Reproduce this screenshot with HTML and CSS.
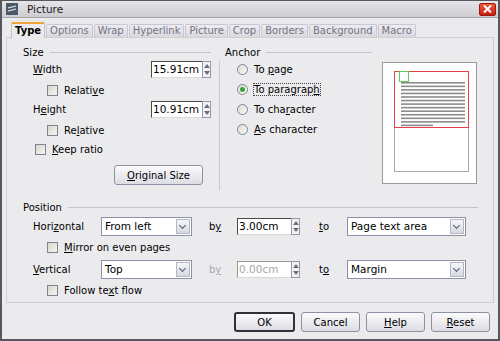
FILE: index.html
```html
<!DOCTYPE html>
<html lang="en">
<head>
    <meta charset="UTF-8">
    <title>Picture</title>
    <link rel="stylesheet" href="styles.css">
</head>
<body>
    <div class="window">
        <div class="titlebar">
            <span class="title-icon">
                <svg width="12" height="12" viewBox="0 0 12 12">
                    <rect x="0" y="0" width="12" height="12" fill="#4b5a66"/>
                    <path d="M2 5 L10 3 M2 8 L10 6" stroke="#e8eef2" stroke-width="1.2"/>
                </svg>
            </span>
            <span class="title">Picture</span>
            <span class="close">
                <svg width="9" height="8" viewBox="0 0 9 8">
                    <path d="M1 0.5 L8 7.5 M8 0.5 L1 7.5" stroke="#fff" stroke-width="2"/>
                </svg>
            </span>
        </div>

        <div class="body">
            <div class="tabs">
                <span class="tab active">Type</span>
                <span class="tab">Options</span>
                <span class="tab">Wrap</span>
                <span class="tab">Hyperlink</span>
                <span class="tab">Picture</span>
                <span class="tab">Crop</span>
                <span class="tab">Borders</span>
                <span class="tab">Background</span>
                <span class="tab">Macro</span>
            </div>

            <div class="panel">
                <div class="top">
                    <div class="size">
                        <div class="sec-head"><span>Size</span><i class="rule"></i></div>
                        <div class="row row-input">
                            <span class="lbl"><u>W</u>idth</span>
                            <span class="spin"><span class="field">15.91cm</span><span class="arrows"></span></span>
                        </div>
                        <div class="row row-check indent2">
                            <span class="check"></span><span>Relati<u>v</u>e</span>
                        </div>
                        <div class="row row-input second">
                            <span class="lbl">H<u>e</u>ight</span>
                            <span class="spin"><span class="field">10.91cm</span><span class="arrows"></span></span>
                        </div>
                        <div class="row row-check indent2">
                            <span class="check"></span><span>Re<u>l</u>ative</span>
                        </div>
                        <div class="row row-check keep">
                            <span class="check"></span><span><u>K</u>eep ratio</span>
                        </div>
                        <button class="btn orig"><u>O</u>riginal Size</button>
                    </div>

                    <div class="vsep"></div>

                    <div class="anchor">
                        <div class="sec-head"><span>Anchor</span><i class="rule"></i></div>
                        <div class="radio-row"><span class="radio"></span><span>To <u>p</u>age</span></div>
                        <div class="radio-row"><span class="radio on"></span><span class="focus">To paragrap<u>h</u></span></div>
                        <div class="radio-row"><span class="radio"></span><span>To cha<u>r</u>acter</span></div>
                        <div class="radio-row"><span class="radio"></span><span><u>A</u>s character</span></div>
                    </div>

                    <div class="preview">
                        <svg width="95" height="122" viewBox="0 0 95 122">
                            <rect x="0.5" y="0.5" width="94" height="121" fill="#fff" stroke="#9a9a9a"/>
                            <rect x="12.5" y="9.5" width="74" height="100" fill="#fff" stroke="#a8a8a8"/>
                            <g fill="#8c8c8c" id="lines"></g>
                            <rect x="12.5" y="9.5" width="74" height="56" fill="none" stroke="#e8404a"/>
                            <rect x="17.5" y="9.5" width="9" height="10" fill="none" stroke="#5ad05a"/>
                        </svg>
                    </div>
                </div>

                <div class="position">
                    <div class="sec-head"><span>Position</span><i class="rule"></i></div>
                    <div class="pos-row">
                        <span class="lbl">Hori<u>z</u>ontal</span>
                        <span class="select w-small"><span class="value">From left</span><span class="drop"></span></span>
                        <span class="by">b<u>y</u></span>
                        <span class="spin"><span class="field">3.00cm</span><span class="arrows"></span></span>
                        <span class="to"><u>t</u>o</span>
                        <span class="select w-large"><span class="value">Page text area</span><span class="drop"></span></span>
                    </div>
                    <div class="row row-check indent2">
                        <span class="check"></span><span><u>M</u>irror on even pages</span>
                    </div>
                    <div class="pos-row">
                        <span class="lbl"><u>V</u>ertical</span>
                        <span class="select w-small"><span class="value">Top</span><span class="drop"></span></span>
                        <span class="by disabled">b<u>y</u></span>
                        <span class="spin"><span class="field disabled">0.00cm</span><span class="arrows"></span></span>
                        <span class="to">t<u>o</u></span>
                        <span class="select w-large"><span class="value">Margin</span><span class="drop"></span></span>
                    </div>
                    <div class="row row-check indent2">
                        <span class="check"></span><span>Follow te<u>x</u>t flow</span>
                    </div>
                </div>
            </div>

            <div class="buttons">
                <button class="btn default">OK</button>
                <button class="btn">Cancel</button>
                <button class="btn"><u>H</u>elp</button>
                <button class="btn"><u>R</u>eset</button>
            </div>
        </div>
    </div>

    <script>
        // text lines inside the anchor preview
        const lines = document.getElementById('lines');
        for (let i = 0; i < 13; i++) {
            const r = document.createElementNS('http://www.w3.org/2000/svg', 'rect');
            r.setAttribute('x', 19);
            r.setAttribute('y', 20 + i * 3.55);
            r.setAttribute('width', i === 12 ? 32 : 64);
            r.setAttribute('height', 1.6);
            lines.appendChild(r);
        }
    </script>
</body>
</html>
```

FILE: styles.css
```css
* {
    box-sizing: border-box;
}

body {
    margin: 0;
    font-family: "DejaVu Sans", sans-serif;
    font-size: 10px;
    color: #000;
    background: #fff;
}

u {
    text-decoration-thickness: 1px;
    text-underline-offset: 1px;
}

.window {
    width: 500px;
    height: 341px;
    border: 2px solid #56585d;
    border-top: 1px solid #56585d;
    background: #ebebee;
    display: flex;
    flex-direction: column;
}

/* title bar */
.titlebar {
    height: 17px;
    display: flex;
    align-items: center;
    padding: 0 2px;
    background: linear-gradient(#e6e6ea, #cdcdd2);
    border-bottom: 1px solid #a4a4aa;
}

.title-icon {
    display: flex;
    margin-left: 2px;
}

.title {
    margin-left: 9px;
    font-size: 10.5px;
    color: #1a1a1a;
}

.close {
    margin-left: auto;
    width: 17px;
    height: 13px;
    display: flex;
    align-items: center;
    justify-content: center;
    background: linear-gradient(#f05a3c, #c81e10);
    border: 1px solid #9a1a10;
    border-radius: 2px;
}

.body {
    flex: 1;
    display: flex;
    flex-direction: column;
    padding: 4px 4px 0 4px;
}

/* tabs */
.tabs {
    display: flex;
    align-items: flex-end;
    height: 15px;
    padding-left: 5px;
    gap: 1px;
}

.tab {
    height: 13px;
    line-height: 12px;
    padding: 0 3px;
    color: #74747c;
    background: linear-gradient(#ececf2, #d8d8e0);
    border: 1px solid #c8c8d0;
    border-bottom: none;
    border-radius: 2px 2px 0 0;
}

.tab.active {
    height: 16px;
    line-height: 14px;
    margin-bottom: -1px;
    font-weight: bold;
    color: #000;
    background: #ebebee;
    border-top: 2px solid #f0a438;
    border-color: #c4c4ca;
    border-top-color: #f0a438;
    position: relative;
}

/* main panel */
.panel {
    border: 1px solid #cfcfd4;
    padding: 8px 15px 2px 16px;
}

.top {
    display: flex;
    align-items: flex-start;
}

.sec-head {
    height: 12px;
    display: flex;
    align-items: center;
    gap: 6px;
}

.sec-head .rule {
    flex: 1;
    height: 1px;
    background: #c4c4ca;
}

.size {
    width: 188px;
}

.row {
    display: flex;
    align-items: center;
}

.row-input {
    height: 17px;
    margin-top: 3px;
    padding-left: 10px;
    justify-content: space-between;
}

.row-input.second {
    margin-top: 1px;
}

.row-check {
    height: 20px;
    margin-top: 2px;
    gap: 6px;
}

.indent2 {
    padding-left: 24px;
}

.keep {
    height: 19px;
    margin-top: 0;
    padding-left: 12px;
}

.check {
    width: 11px;
    height: 11px;
    border: 1px solid #7c8494;
    background: linear-gradient(135deg, #d6d6cc, #f6f6f0);
}

/* spin fields */
.spin {
    display: flex;
    height: 17px;
}

.field {
    width: 51px;
    height: 17px;
    line-height: 15px;
    padding-left: 1px;
    background: #fff;
    border-top: 1px solid #4a4a4a;
    border-left: 1px solid #4a4a4a;
    border-bottom: 1px solid #d8d8d8;
    font-size: 10.5px;
}

.field.disabled {
    color: #a8a8a8;
    border-color: #9a9a9a #d8d8d8 #d8d8d8 #9a9a9a;
}

.arrows {
    width: 9px;
    height: 17px;
    border: 1px solid #9a9aa4;
    background: #f2f2f4;
    position: relative;
}

.arrows::before,
.arrows::after {
    content: "";
    position: absolute;
    left: 1px;
    border-left: 3px solid transparent;
    border-right: 3px solid transparent;
}

.arrows::before {
    top: 2px;
    border-bottom: 4px solid #6a6e7a;
}

.arrows::after {
    bottom: 2px;
    border-top: 4px solid #6a6e7a;
}

/* buttons */
.btn {
    font-family: inherit;
    font-size: 10px;
    color: #000;
    height: 20px;
    padding: 0;
    background: linear-gradient(#fbfbfc, #dcdde4);
    border: 1px solid #8c92a4;
    border-radius: 3px;
}

.orig {
    display: block;
    width: 89px;
    margin: 6px 0 0 91px;
}

.vsep {
    width: 1px;
    height: 129px;
    margin: 15px 5px 0 8px;
    background: #c8c8ce;
}

.anchor {
    width: 147px;
}

.anchor .sec-head {
    margin-bottom: 1px;
}

.radio-row {
    display: flex;
    align-items: center;
    gap: 6px;
    height: 20px;
    padding-left: 12px;
}

.radio {
    width: 11px;
    height: 11px;
    border: 1px solid #7c8494;
    border-radius: 50%;
    background: linear-gradient(135deg, #dcdcd4, #fafaf6);
    position: relative;
}

.radio.on::after {
    content: "";
    position: absolute;
    left: 2px;
    top: 2px;
    width: 5px;
    height: 5px;
    border-radius: 50%;
    background: #3aa43a;
}

.focus {
    outline: 1px dotted #444;
    outline-offset: 0;
}

.preview {
    margin: 16px 0 0 10px;
    display: flex;
}

/* position section */
.position {
    margin-top: 11px;
    width: 455px;
}

.position .row-check {
    margin-top: 1px;
}

.pos-row {
    display: flex;
    align-items: center;
    height: 19px;
    margin-top: 4px;
    padding-left: 10px;
}

.row-check + .pos-row {
    margin-top: 3px;
}

.pos-row .lbl {
    width: 68px;
}

.select {
    display: flex;
    height: 19px;
    background: #fff;
    border: 1px solid #8c92a4;
}

.w-small {
    width: 91px;
}

.w-large {
    width: 119px;
}

.select .value {
    flex: 1;
    line-height: 17px;
    padding-left: 3px;
    font-size: 10.5px;
}

.drop {
    width: 14px;
    margin: 1px;
    background: linear-gradient(#f6f6f8, #d8d8e0);
    border: 1px solid #b4b8c4;
    position: relative;
}

.drop::after {
    content: "";
    position: absolute;
    left: 3px;
    top: 3px;
    width: 4px;
    height: 4px;
    border-right: 1.5px solid #4a5a7a;
    border-bottom: 1.5px solid #4a5a7a;
    transform: rotate(45deg);
}

.by {
    width: 28px;
    margin-left: 17px;
}

.to {
    width: 28px;
    margin-left: 19px;
}

.disabled {
    color: #a8a8b0;
}

.pos-row .field {
    width: 54px;
}

.buttons {
    display: flex;
    justify-content: flex-end;
    gap: 6px;
    padding: 9px 4px 0 0;
}

.buttons .btn {
    width: 59px;
}

.btn.default {
    width: 61px;
    border: 2px solid #30323a;
}
```
